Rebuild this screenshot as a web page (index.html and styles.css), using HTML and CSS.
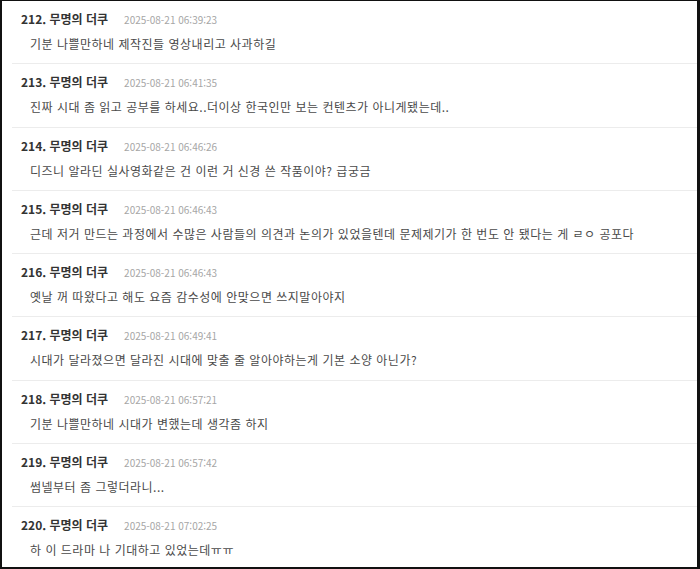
FILE: index.html
```html
<!DOCTYPE html>
<html lang="ko">
<head>
<meta charset="utf-8">
<link rel="stylesheet" href="styles.css">
</head>
<body>
<div class="frame">
  <ul class="comments">
    <li class="comment">
      <div class="meta"><span class="author">212. 무명의 더쿠</span><span class="date">2025-08-21 06:39:23</span></div>
      <p class="text">기분 나쁠만하네 제작진들 영상내리고 사과하길</p>
    </li>
    <li class="comment">
      <div class="meta"><span class="author">213. 무명의 더쿠</span><span class="date">2025-08-21 06:41:35</span></div>
      <p class="text">진짜 시대 좀 읽고 공부를 하세요..더이상 한국인만 보는 컨텐츠가 아니게됐는데..</p>
    </li>
    <li class="comment">
      <div class="meta"><span class="author">214. 무명의 더쿠</span><span class="date">2025-08-21 06:46:26</span></div>
      <p class="text">디즈니 알라딘 실사영화같은 건 이런 거 신경 쓴 작품이야? 급궁금</p>
    </li>
    <li class="comment">
      <div class="meta"><span class="author">215. 무명의 더쿠</span><span class="date">2025-08-21 06:46:43</span></div>
      <p class="text">근데 저거 만드는 과정에서 수많은 사람들의 의견과 논의가 있었을텐데 문제제기가 한 번도 안 됐다는 게 ㄹㅇ 공포다</p>
    </li>
    <li class="comment">
      <div class="meta"><span class="author">216. 무명의 더쿠</span><span class="date">2025-08-21 06:46:43</span></div>
      <p class="text">옛날 꺼 따왔다고 해도 요즘 감수성에 안맞으면 쓰지말아야지</p>
    </li>
    <li class="comment">
      <div class="meta"><span class="author">217. 무명의 더쿠</span><span class="date">2025-08-21 06:49:41</span></div>
      <p class="text">시대가 달라졌으면 달라진 시대에 맞출 줄 알아야하는게 기본 소양 아닌가?</p>
    </li>
    <li class="comment">
      <div class="meta"><span class="author">218. 무명의 더쿠</span><span class="date">2025-08-21 06:57:21</span></div>
      <p class="text">기분 나쁠만하네 시대가 변했는데 생각좀 하지</p>
    </li>
    <li class="comment">
      <div class="meta"><span class="author">219. 무명의 더쿠</span><span class="date">2025-08-21 06:57:42</span></div>
      <p class="text">썸넬부터 좀 그렇더라니...</p>
    </li>
    <li class="comment">
      <div class="meta"><span class="author">220. 무명의 더쿠</span><span class="date">2025-08-21 07:02:25</span></div>
      <p class="text">하 이 드라마 나 기대하고 있었는데ㅠㅠ</p>
    </li>
  </ul>
</div>
</body>
</html>
```
FILE: styles.css
```css
html, body {
  margin: 0;
  padding: 0;
  height: 100%;
  background: #111;
}
body {
  padding: 1px 3px 2px 2px;
  box-sizing: border-box;
  font-family: "Noto Sans CJK KR", "Noto Sans", sans-serif;
}
.frame {
  background: #fff;
  height: 100%;
  overflow: hidden;
}
.comments {
  list-style: none;
  margin: 0;
  padding: 0 0 0 10px;
}
.comment {
  padding: 10px 0 10.3px 9px;
  border-bottom: 1px solid #ececec;
}
.meta {
  display: flex;
  align-items: baseline;
  gap: 16px;
  height: 16px;
  line-height: 16px;
}
.author {
  font-size: 12px;
  font-weight: 700;
  color: #333;
}
.date {
  font-size: 10px;
  color: #a6a6a6;
}
.text {
  margin: 8px 0 0 9px;
  font-size: 12px;
  line-height: 18px;
  letter-spacing: 0.5px;
  color: #4a4a4a;
}
```
